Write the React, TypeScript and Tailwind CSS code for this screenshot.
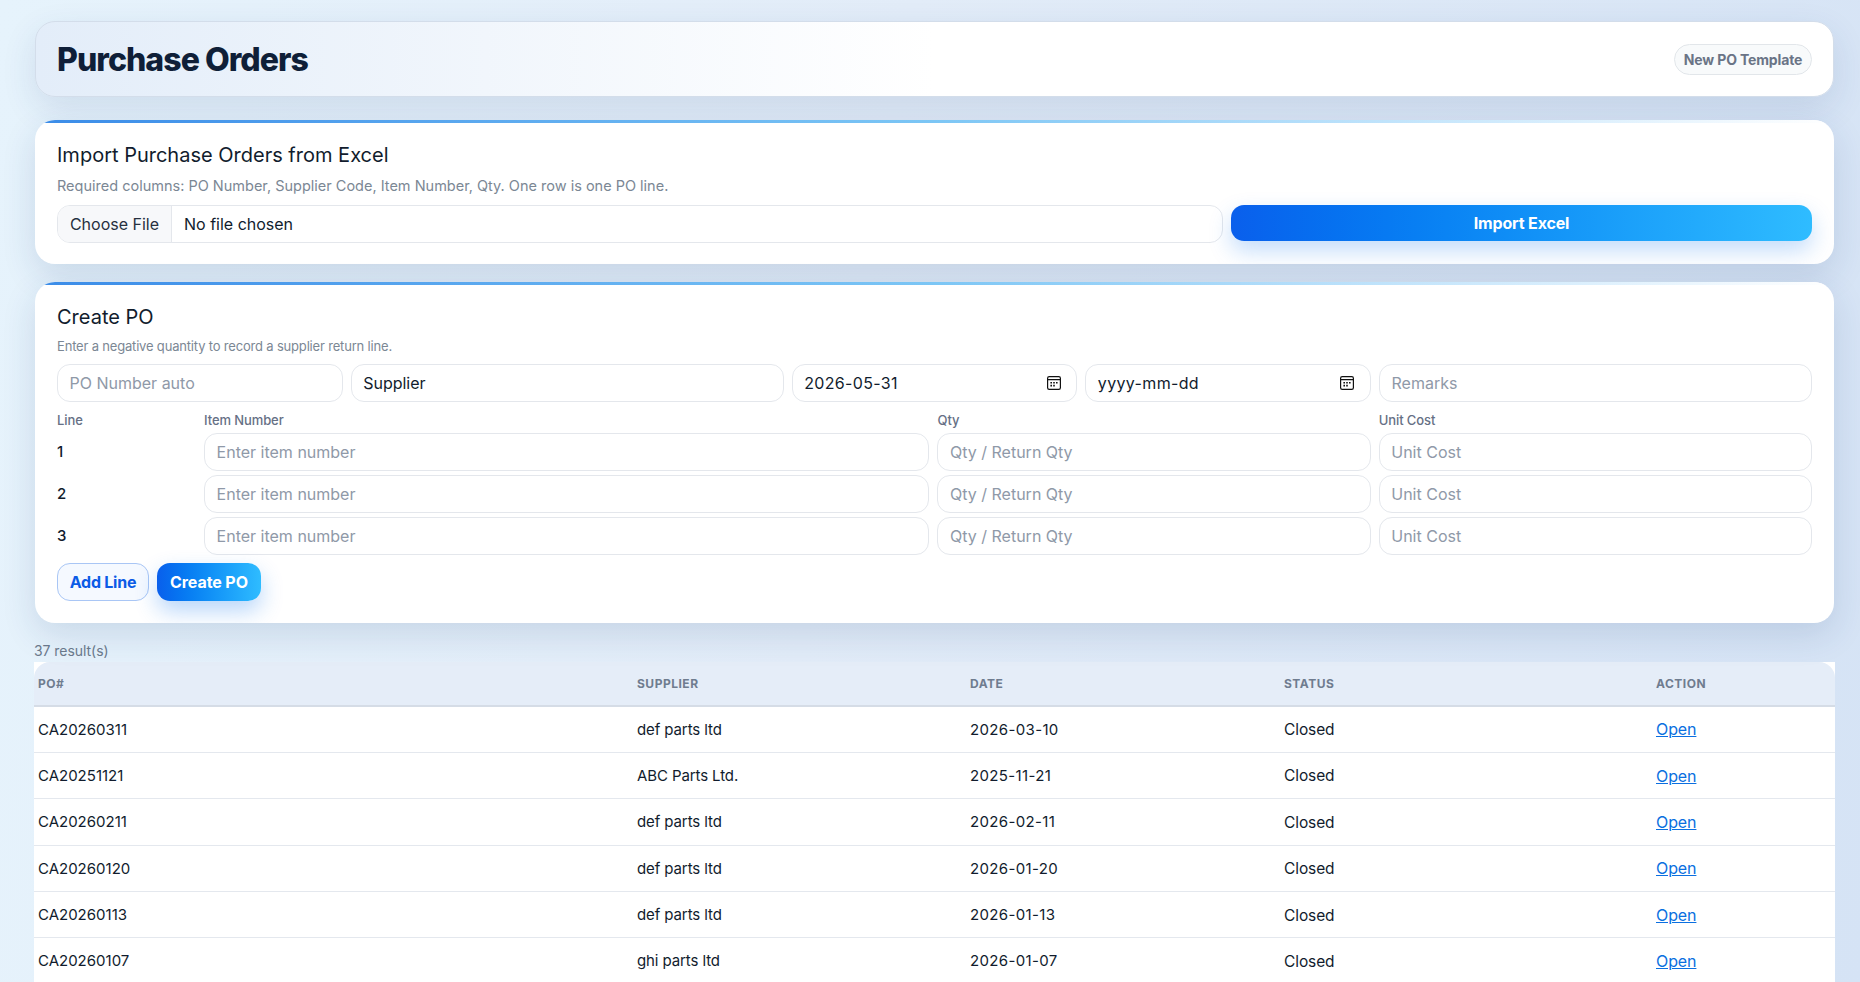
const rows = [
  { po: "CA20260311", supplier: "def parts ltd", date: "2026-03-10", status: "Closed" },
  { po: "CA20251121", supplier: "ABC Parts Ltd.", date: "2025-11-21", status: "Closed" },
  { po: "CA20260211", supplier: "def parts ltd", date: "2026-02-11", status: "Closed" },
  { po: "CA20260120", supplier: "def parts ltd", date: "2026-01-20", status: "Closed" },
  { po: "CA20260113", supplier: "def parts ltd", date: "2026-01-13", status: "Closed" },
  { po: "CA20260107", supplier: "ghi parts ltd", date: "2026-01-07", status: "Closed" },
];

const fieldClass =
  "h-[38px] w-full min-w-0 rounded-[13px] border border-[#e4e7ec] bg-white px-[11.5px] text-[16px] tracking-[0px] text-[#111c2d] placeholder:text-[#8f99a8] outline-none";

const labelClass = "h-[17px] text-[13px] font-medium leading-[17px] tracking-[-0.1px] text-[#667085]";

const cardClass =
  "relative mx-px overflow-hidden rounded-[20px] bg-white shadow-[0_12px_34px_rgba(30,64,120,0.14)]";

function CalendarIcon() {
  return (
    <svg width="14" height="14" viewBox="0 0 14 14" fill="none" aria-hidden="true" className="mr-[4px] shrink-0">
      <rect x="0.6" y="0.6" width="12.8" height="12.8" rx="1.6" stroke="#111" strokeWidth="1.2" />
      <path d="M1 3.6h12" stroke="#111" strokeWidth="1.3" />
      <path
        d="M3.4 5.9h1.6v1.6H3.4zM6.2 5.9h1.6v1.6H6.2zM9 5.9h1.6v1.6H9zM3.4 8.8h1.6v1.6H3.4zM6.2 8.8h1.6v1.6H6.2z"
        fill="#111"
      />
    </svg>
  );
}

function DateField({ value }: { value: string }) {
  return (
    <div className={`${fieldClass} flex items-center justify-between`}>
      <span className="tracking-[0.35px]">{value}</span>
      <CalendarIcon />
    </div>
  );
}

function AccentBar() {
  return (
    <div className="absolute inset-x-0 top-0 h-[3px] bg-gradient-to-r from-[#3b8ce8] via-[#7cc6f5] to-[#ffffff]" />
  );
}

export default function App() {
  return (
    <div
      className="h-[982px] overflow-hidden bg-[linear-gradient(100deg,#e6f3fc_0%,#e2ecf8_45%,#d5e3f5_100%)] pl-[34px] pt-[21px] text-[#111c2d]"
      style={{ fontFamily: "Inter, 'Noto Sans', sans-serif" }}
    >
      <div className="w-[1801px]">
        <header className="mx-px flex h-[76px] items-center justify-between rounded-[20px] border border-[#d3ddea] bg-gradient-to-r from-[#e3edf9] via-[#ffffff] to-[#ffffff] pl-[21px] pr-[21px] shadow-[0_12px_34px_rgba(30,64,120,0.12)]">
          <h1 className="pt-[1px] text-[32px] font-extrabold tracking-[-0.95px] text-[#0f1f38]">Purchase Orders</h1>
          <button
            type="button"
            className="h-[31px] w-[138px] rounded-full border border-[#e2e6ea] bg-[#f8fafb] text-[14px] font-bold tracking-[-0.15px] text-[#6a7486]"
          >
            New PO Template
          </button>
        </header>

        <section className={`${cardClass} mt-[23px] h-[144px] px-[22px] pt-[23px]`}>
          <AccentBar />
          <h2 className="text-[20px] font-normal leading-[24px] tracking-[0px]">
            Import Purchase Orders from Excel
          </h2>
          <p className="mt-[9px] text-[14.5px] leading-[20px] tracking-[0px] text-[#7b8794]">
            Required columns: PO Number, Supplier Code, Item Number, Qty. One row is one PO line.
          </p>
          <div className="mt-[9px] grid grid-cols-[1166px_1fr] gap-[8px]">
            <div className="flex h-[38px] items-center overflow-hidden rounded-[13px] border border-[#e4e7ec] text-[16px]">
              <span className="flex h-full w-[114px] items-center justify-center border-r border-[#e4e7ec] bg-[#f7f8fa] text-[#26303f]">
                Choose File
              </span>
              <span className="pl-[12px]">No file chosen</span>
            </div>
            <button
              type="button"
              className="h-[36px] rounded-[13px] bg-gradient-to-r from-[#0a5fec] to-[#2fbcff] text-[16px] font-bold tracking-[-0.15px] text-white shadow-[0_10px_22px_rgba(20,120,240,0.25)]"
            >
              Import Excel
            </button>
          </div>
        </section>

        <section className={`${cardClass} mt-[18px] h-[341px] px-[22px] pt-[23px]`}>
          <AccentBar />
          <h2 className="text-[20px] font-normal leading-[24px] tracking-[0px]">Create PO</h2>
          <p className="mt-[8px] text-[13px] leading-[18px] tracking-[-0.18px] text-[#7b8794]">
            Enter a negative quantity to record a supplier return line.
          </p>
          <div className="mt-[8.5px] grid grid-cols-[285fr_432fr_285fr_285fr_432fr] gap-[8px]">
            <input className={fieldClass} placeholder="PO Number auto" />
            <div className={`${fieldClass} flex items-center`}>Supplier</div>
            <DateField value="2026-05-31" />
            <DateField value="yyyy-mm-dd" />
            <input className={fieldClass} placeholder="Remarks" />
          </div>
          <div className="mt-[10px] grid grid-cols-[139fr_725fr_433fr_433fr] gap-x-[8px] gap-y-[4px]">
            <div className={labelClass}>Line</div>
            <div className={labelClass}>Item Number</div>
            <div className={labelClass}>Qty</div>
            <div className={labelClass}>Unit Cost</div>
            {[1, 2, 3].map((line) => (
              <div key={line} className="contents">
                <div className="flex items-center pt-[1px] text-[15px] font-medium">{line}</div>
                <input className={fieldClass} placeholder="Enter item number" />
                <input className={fieldClass} placeholder="Qty / Return Qty" />
                <input className={fieldClass} placeholder="Unit Cost" />
              </div>
            ))}
          </div>
          <div className="mt-[8px] flex gap-[8px]">
            <button
              type="button"
              className="h-[38px] w-[92px] rounded-[13px] border border-[#a9c6f5] bg-[#f5f9ff] text-[16px] font-bold tracking-[-0.25px] text-[#0b5be6]"
            >
              Add Line
            </button>
            <button
              type="button"
              className="h-[38px] w-[104px] rounded-[13px] bg-gradient-to-r from-[#0a5fec] to-[#2fbcff] text-[16px] font-bold tracking-[-0.1px] text-white shadow-[0_10px_22px_rgba(20,120,240,0.3)]"
            >
              Create PO
            </button>
          </div>
        </section>

        <div className="mt-[18px] text-[14px] leading-[20px] tracking-[-0.05px] text-[#6c7a8c]">37 result(s)</div>

        <table className="mt-[1px] w-full table-fixed border-collapse bg-white text-left">
          <thead>
            <tr className="h-[44px] border-b-2 border-[#d5dce6] bg-[#e5edf8] text-[12px] font-bold uppercase tracking-[0.5px] text-[#6f7c8f]">
              <th className="w-[599px] rounded-tl-[16px] pl-[4px] pt-[1px] font-bold">PO#</th>
              <th className="w-[333px] pl-[4px] pt-[1px] font-bold">Supplier</th>
              <th className="w-[314px] pl-[4px] pt-[1px] font-bold">Date</th>
              <th className="w-[372px] pl-[4px] pt-[1px] font-bold">Status</th>
              <th className="rounded-tr-[16px] pl-[4px] pt-[1px] font-bold">Action</th>
            </tr>
          </thead>
          <tbody>
            {rows.map((row) => (
              <tr key={row.po} className="h-[46.4px] border-b border-[#e4e8ee] text-[15px] tracking-[-0.1px]">
                <td className="pl-[4px] pt-[1px] tracking-[0px]">{row.po}</td>
                <td className="pl-[4px] pt-[1px]">{row.supplier}</td>
                <td className="pl-[4px] pt-[1px] tracking-[0.35px]">{row.date}</td>
                <td className="pl-[4px] pt-[1px] text-[15.5px]">{row.status}</td>
                <td className="pl-[4px] text-[16px]">
                  <a href="#" className="text-[#0b6fe0] underline">
                    Open
                  </a>
                </td>
              </tr>
            ))}
          </tbody>
        </table>
      </div>
    </div>
  );
}
